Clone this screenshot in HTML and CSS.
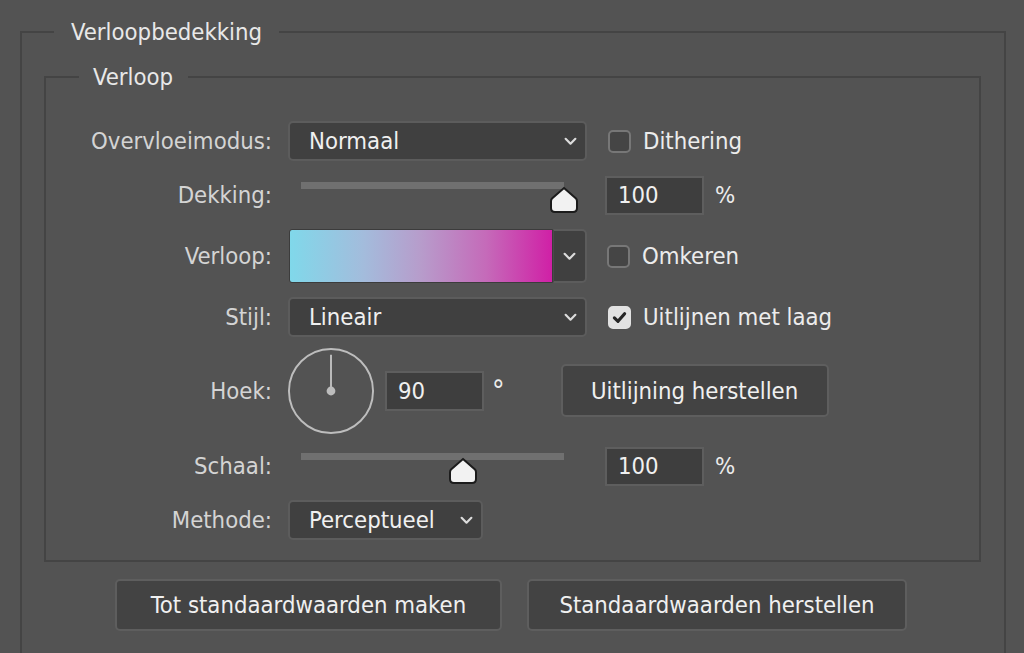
FILE: index.html
```html
<!DOCTYPE html>
<html lang="nl">
<head>
<meta charset="utf-8">
<title>Verloopbedekking</title>
<link rel="stylesheet" href="styles.css">
</head>
<body>
<fieldset class="panel">
  <legend class="panel-title">Verloopbedekking</legend>
  <fieldset class="group">
    <legend class="group-title">Verloop</legend>
    <div class="rows">
      <div class="row">
        <span class="lbl">Overvloeimodus:</span>
        <div class="select select--wide"><span class="val">Normaal</span><svg class="chev" viewBox="0 0 12 8"><path d="M1.5 1.5 L6 6 L10.5 1.5"/></svg></div>
        <span class="check"><span class="box"></span><span class="check-text">Dithering</span></span>
      </div>
      <div class="row">
        <span class="lbl">Dekking:</span>
        <div class="slider"><div class="track"><svg class="thumb" style="left:100%" viewBox="0 0 30 28"><path d="M15 2 L27 12.5 Q28 13.5 28 15.5 L28 22 Q28 26 24 26 L6 26 Q2 26 2 22 L2 15.5 Q2 13.5 3 12.5 Z"/></svg></div></div>
        <div class="num"><span class="val">100</span></div>
        <span class="unit">%</span>
      </div>
      <div class="row row--tall">
        <span class="lbl">Verloop:</span>
        <div class="gradient-picker">
          <div class="gradient-swatch"></div>
          <div class="gradient-btn"><svg class="chev" viewBox="0 0 12 8"><path d="M1.5 1.5 L6 6 L10.5 1.5"/></svg></div>
        </div>
        <span class="check check--near"><span class="box"></span><span class="check-text">Omkeren</span></span>
      </div>
      <div class="row">
        <span class="lbl">Stijl:</span>
        <div class="select select--wide"><span class="val">Lineair</span><svg class="chev" viewBox="0 0 12 8"><path d="M1.5 1.5 L6 6 L10.5 1.5"/></svg></div>
        <span class="check"><span class="box box--on"><svg viewBox="0 0 16 16"><path d="M3.2 8.4 L6.6 11.6 L12.8 4.4"/></svg></span><span class="check-text">Uitlijnen met laag</span></span>
      </div>
      <div class="row row--dial">
        <span class="lbl">Hoek:</span>
        <svg class="dial" viewBox="0 0 90 90"><circle cx="45" cy="45" r="43"/><line x1="45" y1="45" x2="45" y2="8"/><circle class="dot" cx="45" cy="45" r="4.5"/></svg>
        <div class="num num--angle"><span class="val">90</span></div>
        <span class="deg">°</span>
        <button class="btn btn--align">Uitlijning herstellen</button>
      </div>
      <div class="row">
        <span class="lbl">Schaal:</span>
        <div class="slider"><div class="track"><svg class="thumb" style="left:61.6%" viewBox="0 0 30 28"><path d="M15 2 L27 12.5 Q28 13.5 28 15.5 L28 22 Q28 26 24 26 L6 26 Q2 26 2 22 L2 15.5 Q2 13.5 3 12.5 Z"/></svg></div></div>
        <div class="num"><span class="val">100</span></div>
        <span class="unit">%</span>
      </div>
      <div class="row">
        <span class="lbl">Methode:</span>
        <div class="select select--narrow"><span class="val">Perceptueel</span><svg class="chev" viewBox="0 0 12 8"><path d="M1.5 1.5 L6 6 L10.5 1.5"/></svg></div>
      </div>
    </div>
  </fieldset>
  <div class="actions">
    <button class="btn btn--defaults">Tot standaardwaarden maken</button>
    <button class="btn btn--reset">Standaardwaarden herstellen</button>
  </div>
</fieldset>
</body>
</html>
```

FILE: styles.css
```css
html, body {
  margin: 0;
  padding: 0;
  height: 653px;
  overflow: hidden;
  background: #535353;
}

body {
  font-family: "DejaVu Sans", "Noto Sans", sans-serif;
  font-stretch: condensed;
  font-size: 23.7px;
  color: #d6d6d6;
}

.panel {
  box-sizing: border-box;
  width: 986px;
  margin: 18px 0 0 20px;
  padding: 17px 23px 60px 22px;
  border: 2px solid #444444;
  min-height: 700px;
}

.panel-title {
  margin-left: 10px;
  padding: 0 17px;
  line-height: 28px;
  color: #e8e8e8;
}

.group {
  box-sizing: border-box;
  margin: 0;
  padding: 30px 0 20px 0;
  border: 2px solid #444444;
}

.group-title {
  margin-left: 33px;
  padding: 0 15px 0 14px;
  line-height: 28px;
  color: #e8e8e8;
}

.rows {
  display: flex;
  flex-direction: column;
  gap: 14px;
}

.row {
  display: flex;
  align-items: center;
  height: 40px;
}

.row--tall {
  height: 54px;
}

.row--dial {
  height: 88px;
  margin: -4px 0 -3px;
}

.lbl {
  width: 226px;
  padding-right: 16px;
  text-align: right;
  flex: none;
  color: #d4d4d4;
}

.val {
  color: #f0f0f0;
}

.select {
  box-sizing: border-box;
  height: 40px;
  display: flex;
  align-items: center;
  justify-content: space-between;
  padding: 0 8px 0 19px;
  background: #404040;
  border: 2px solid #5c5c5c;
  border-radius: 5px;
  flex: none;
}

.select--wide { width: 299px; }
.select--narrow { width: 195px; }

.chev {
  width: 13px;
  height: 9px;
  fill: none;
  stroke: #dcdcdc;
  stroke-width: 2;
  stroke-linecap: round;
  stroke-linejoin: round;
}

.check {
  display: flex;
  align-items: center;
  margin-left: 21px;
  color: #ececec;
}

.check--near { margin-left: 20px; }

.box {
  box-sizing: border-box;
  width: 23px;
  height: 23px;
  border: 2px solid #777777;
  border-radius: 5px;
  background: #454545;
  margin-right: 12px;
  display: flex;
  align-items: center;
  justify-content: center;
}

.box--on {
  background: #e2e2e2;
  border-color: #e2e2e2;
}

.box--on svg {
  width: 17px;
  height: 17px;
  fill: none;
  stroke: #262626;
  stroke-width: 3;
  stroke-linecap: round;
  stroke-linejoin: round;
}

.slider {
  width: 299px;
  height: 40px;
  flex: none;
}

.track {
  position: relative;
  margin: 7px 0 0 13px;
  width: 263px;
  height: 7px;
  background: #707070;
}

.thumb {
  position: absolute;
  top: 4px;
  width: 30px;
  height: 28px;
  transform: translateX(-50%);
  fill: #f2f2f2;
  stroke: #1c1c1c;
  stroke-width: 2;
}

.num {
  box-sizing: border-box;
  width: 99px;
  height: 39px;
  margin-left: 18px;
  padding-left: 11px;
  display: flex;
  align-items: center;
  background: #3e3e3e;
  border: 2px solid #5e5e5e;
  flex: none;
}

.num--angle {
  margin-left: 10px;
  height: 40px;
}

.unit {
  margin-left: 11px;
  color: #ececec;
}

.deg {
  margin: 0 0 0 8px;
  color: #ececec;
  font-size: 28px;
  line-height: 1;
}

.gradient-picker {
  display: flex;
  width: 299px;
  height: 54px;
  flex: none;
}

.gradient-swatch {
  box-sizing: border-box;
  margin-left: 1px;
  width: 264px;
  height: 54px;
  border: 1px solid #3c3c3c;
  border-radius: 3px 0 0 3px;
  background: linear-gradient(90deg, #80d8ea 0%, #a3bcdc 28%, #b79ccb 50%, #c56ab9 75%, #d020a6 100%);
}

.gradient-btn {
  box-sizing: border-box;
  width: 34px;
  height: 54px;
  background: #404040;
  border: 2px solid #5c5c5c;
  border-left: 1px solid #4a4a4a;
  border-radius: 0 5px 5px 0;
  display: flex;
  align-items: center;
  justify-content: center;
}

.dial {
  width: 88px;
  height: 88px;
  margin-left: -1px;
  flex: none;
  fill: none;
  stroke: #bdbdbd;
  stroke-width: 2;
}

.dial .dot {
  fill: #bdbdbd;
  stroke: none;
}

.btn {
  box-sizing: border-box;
  font: inherit;
  color: #f0f0f0;
  background: #434343;
  border: 2px solid #5e5e5e;
  border-radius: 5px;
  padding: 0;
  flex: none;
}

.btn--align {
  width: 268px;
  height: 53px;
  margin-left: 56px;
  margin-top: -1px;
}

.actions {
  display: flex;
  gap: 25px;
  margin-top: 17px;
  padding-left: 71px;
}

.btn--defaults {
  width: 387px;
  height: 52px;
}

.btn--reset {
  width: 380px;
  height: 52px;
}
```
